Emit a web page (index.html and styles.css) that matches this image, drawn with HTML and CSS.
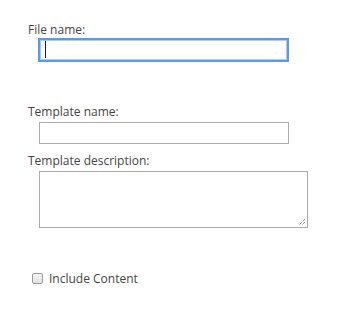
FILE: index.html
```html
<!DOCTYPE html>
<html>
<head>
<meta charset="utf-8">
<link rel="stylesheet" href="styles.css">
</head>
<body>
<form class="form">
  <div class="field">
    <label class="label" for="fn">File name:</label>
    <div class="input focused" id="fn"><span class="caret"></span></div>
  </div>
  <div class="field field-gap">
    <label class="label">Template name:</label>
    <div class="input"></div>
  </div>
  <div class="field field-desc">
    <label class="label">Template description:</label>
    <div class="textarea">
      <svg class="grip" width="8" height="8" viewBox="0 0 8 8">
        <path d="M7 1 L1 7 M7 4 L4 7" stroke="#555" stroke-width="1" stroke-dasharray="1 1" fill="none"/>
      </svg>
    </div>
  </div>
  <div class="check-row">
    <span class="checkbox"></span>
    <span class="check-label">Include Content</span>
  </div>
</form>
</body>
</html>
```

FILE: styles.css
```css
html, body {
  margin: 0;
  padding: 0;
  background: #fff;
}
body {
  font-family: "Open Sans", "Noto Sans", sans-serif;
  font-size: 12px;
  color: #444;
}
.form {
  padding: 21px 0 0 28px;
}
.field {
  display: flex;
  flex-direction: column;
}
.label {
  line-height: 17px;
}
.input {
  box-sizing: border-box;
  width: 250px;
  height: 22px;
  margin: 2px 0 0 11px;
  border: 1px solid #ababab;
  position: relative;
}
.input.focused {
  height: 24px;
  margin: 0 0 0 10px;
  width: 251px;
  border: 2px solid #5a9ae8;
  box-shadow: inset 0 0 0 1px #aacbf2;
}
.caret {
  position: absolute;
  left: 5px;
  top: 1px;
  width: 1px;
  height: 17px;
  background: #222;
}
.field-gap {
  margin-top: 41px;
}
.field-desc {
  margin-top: 8px;
}
.textarea {
  box-sizing: border-box;
  width: 269px;
  height: 57px;
  margin: 2px 0 0 11px;
  border: 1px solid #ababab;
  position: relative;
}
.grip {
  position: absolute;
  right: 1px;
  bottom: 1px;
}
.check-row {
  display: flex;
  align-items: center;
  margin: 42px 0 0 4px;
}
.checkbox {
  box-sizing: border-box;
  width: 11px;
  height: 11px;
  border: 1px solid #9a9a9a;
  border-radius: 2px;
  background: linear-gradient(#f4f4f4, #e2e2e2);
}
.check-label {
  margin-left: 6px;
  line-height: 17px;
}
```
